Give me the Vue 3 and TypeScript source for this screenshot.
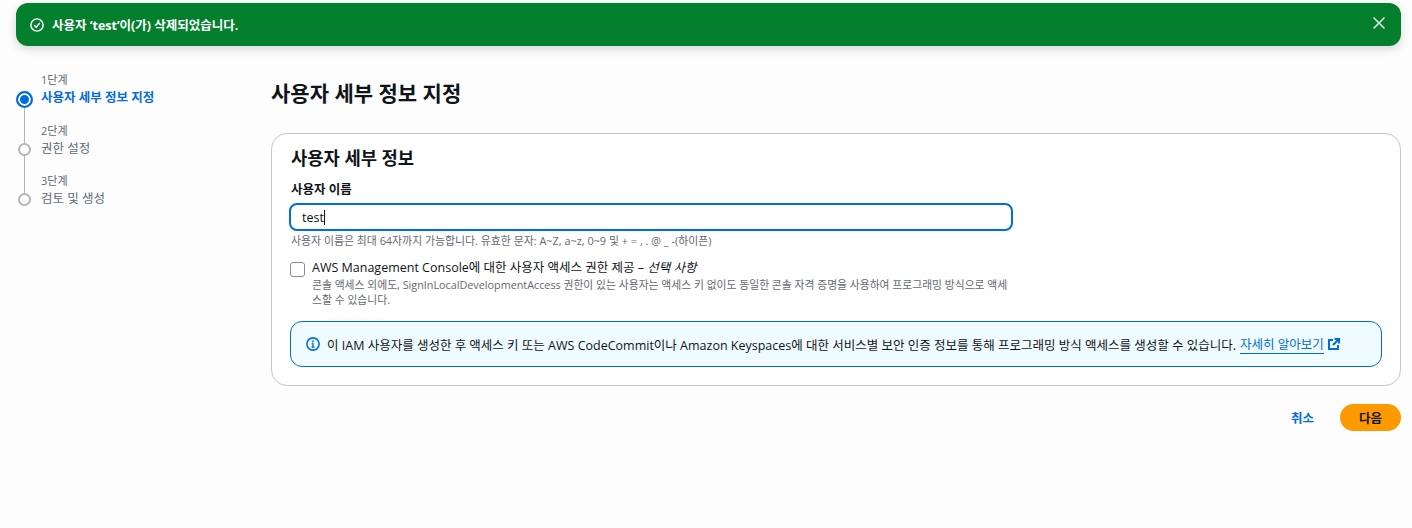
<template>
  <div class="page">
    <div class="flash">
      <svg class="flash-icon" viewBox="0 0 16 16" width="14" height="14" fill="none">
        <circle cx="8" cy="8" r="7" stroke="currentColor" stroke-width="1.7" />
        <path d="M4.8 8.2 7.1 10.5 11.2 5.8" stroke="currentColor" stroke-width="1.7" />
      </svg>
      <span class="flash-text">사용자 ‘test’이(가) 삭제되었습니다.</span>
      <svg class="flash-close" viewBox="0 0 16 16" width="16" height="16" fill="none">
        <path d="M2.500 2.500 13.500 13.500M13.500 2.500 2.500 13.500" stroke="currentColor" stroke-width="1.6" />
      </svg>
    </div>

    <div class="layout">
      <nav class="steps">
        <div v-for="(step, i) in steps" :key="step.label" class="step" :class="{ active: i === 0 }">
          <div class="step-num">{{ i + 1 }}단계</div>
          <div class="step-row">
            <span class="dot"></span>
            <span class="step-label">{{ step.label }}</span>
          </div>
        </div>
      </nav>

      <main class="main">
        <h1 class="title">사용자 세부 정보 지정</h1>

        <section class="card">
          <h2 class="card-title">사용자 세부 정보</h2>
          <label class="field-label">사용자 이름</label>
          <div class="input"><span>test</span><i class="caret"></i></div>
          <p class="hint">사용자 이름은 최대 64자까지 가능합니다. 유효한 문자: A~Z, a~z, 0~9 및 + = , . @ _ -(하이픈)</p>

          <div class="check">
            <span class="box"></span>
            <div class="check-body">
              <div class="check-label">AWS Management Console에 대한 사용자 액세스 권한 제공 – <em>선택 사항</em></div>
              <p class="check-desc">콘솔 액세스 외에도, SignInLocalDevelopmentAccess 권한이 있는 사용자는 액세스 키 없이도 동일한 콘솔 자격 증명을 사용하여 프로그래밍 방식으로 액세<wbr />스할 수 있습니다.</p>
            </div>
          </div>

          <div class="info">
            <svg class="info-icon" viewBox="0 0 16 16" width="14" height="14" fill="none">
              <circle cx="8" cy="8" r="7" stroke="currentColor" stroke-width="1.8" />
              <path d="M8 7v4.500M6.400 11.500h3.200M6.600 7H8" stroke="currentColor" stroke-width="1.600" />
              <rect x="7.100" y="3.900" width="1.800" height="1.800" fill="currentColor" />
            </svg>
            <span class="info-text">이 IAM 사용자를 생성한 후 액세스 키 또는 AWS CodeCommit이나 Amazon Keyspaces에 대한 서비스별 보안 인증 정보를 통해 프로그래밍 방식 액세스를 생성할 수 있습니다.</span>
            <a class="more">자세히 알아보기</a>
            <svg class="ext-icon" viewBox="0 0 12 12" width="12" height="12" fill="none">
              <path d="M5 2H1v9h9V7" stroke="currentColor" stroke-width="2" />
              <path d="M6.500 1H11v4.500M10.500 1.500 5 7" stroke="currentColor" stroke-width="2" />
            </svg>
          </div>
        </section>

        <div class="actions">
          <button class="cancel">취소</button>
          <button class="next">다음</button>
        </div>
      </main>
    </div>
  </div>
</template>

<script setup lang="ts">
const steps = [
  { label: '사용자 세부 정보 지정' },
  { label: '권한 설정' },
  { label: '검토 및 생성' },
]
</script>

<style>
html,
body {
  background: #fdfdfd;
}
</style>

<style scoped>
.page {
  height: 528px;
  box-sizing: border-box;
  padding: 3px 11px 0 16px;
  overflow: hidden;
  font-family: 'Open Sans', 'Noto Sans CJK KR', sans-serif;
  font-size: 12.500px;
  color: #0f141a;
}

.flash {
  display: flex;
  align-items: center;
  height: 43px;
  padding: 0 14px 0 14px;
  border-radius: 12px;
  background: #037f2e;
  color: #fff;
  box-shadow: 0 3px 10px rgba(0, 0, 0, 0.16);
}

.flash-icon {
  margin-right: 8px;
}

.flash-text {
  font-weight: 700;
}

.flash-close {
  margin-left: auto;
  margin-bottom: 3px;
  color: #dfe9e2;
}

.layout {
  display: grid;
  grid-template-columns: 255px 1fr;
  padding-top: 26px;
}

.step {
  position: relative;
  height: 50px;
  padding-left: 25px;
}

.step:first-child {
  height: 51px;
}

.step-num {
  height: 16px;
  font-size: 11px;
  line-height: 16px;
  color: #5f6b7a;
}

.step-row {
  display: flex;
  align-items: center;
  height: 20px;
  margin-top: -2px;
  color: #5f6b7a;
}

.dot {
  position: absolute;
  z-index: 1;
  left: 2px;
  top: 20px;
  width: 9px;
  height: 9px;
  border: 2px solid #b4b4bb;
  border-radius: 50%;
  background: #fff;
}

.step:not(:last-child)::after {
  content: '';
  position: absolute;
  left: 8px;
  top: 30px;
  width: 1px;
  height: 42px;
  background: #b4b4bb;
}

.active .step-label {
  font-weight: 700;
  color: #006ce0;
}

.active .dot {
  left: 0;
  top: 19px;
  width: 13px;
  height: 13px;
  border-color: #006ce0;
  box-shadow: inset 0 0 0 2px #fff;
  background: #006ce0;
}

.main {
  min-width: 0;
}

.title {
  margin: 0;
  padding-top: 3px;
  height: 61px;
  box-sizing: border-box;
  font-size: 21px;
  line-height: 36px;
  font-weight: 700;
}

.card {
  height: 253px;
  box-sizing: border-box;
  padding: 12px 19px 0;
  border: 1px solid #c6c6cd;
  border-radius: 16px;
  background: #fff;
}

.card-title {
  margin: 0;
  height: 25px;
  font-size: 17.700px;
  line-height: 25px;
  font-weight: 700;
}

.field-label {
  display: block;
  margin-top: 10px;
  height: 18px;
  line-height: 18px;
  font-weight: 700;
}

.input {
  display: flex;
  align-items: center;
  width: 724px;
  height: 28px;
  margin: 4px 0 0 -2px;
  box-sizing: border-box;
  padding-left: 11px;
  border: 2px solid #006ce0;
  border-radius: 8px;
}

.caret {
  width: 1px;
  height: 15px;
  background: #0f141a;
}

.hint {
  margin: 1px 0 0;
  height: 18px;
  font-size: 10.900px;
  line-height: 18px;
  color: #656871;
}

.check {
  display: flex;
  gap: 7px;
  width: 722px;
  margin: 9px 0 0 -1px;
}

.box {
  flex: none;
  width: 13px;
  height: 13px;
  margin-top: 3px;
  border: 1px solid #8c8c94;
  border-radius: 3px;
  background: #fff;
}

.check-label {
  height: 18px;
  line-height: 18px;
}

.check-desc {
  margin: 0;
  font-size: 10.800px;
  line-height: 15px;
  color: #656871;
}

.info {
  display: flex;
  align-items: center;
  height: 46px;
  box-sizing: border-box;
  margin: 14px -1px 0;
  padding: 0 15px;
  border: 1px solid #006ce0;
  border-radius: 12px;
  background: #f0fbff;
  white-space: nowrap;
}

.info-icon {
  flex: none;
  margin-right: 7px;
  color: #006ce0;
}

.more {
  margin-left: 4px;
  color: #006ce0;
  border-bottom: 1px solid #006ce0;
}

.ext-icon {
  flex: none;
  margin-left: 4px;
  color: #006ce0;
}

.actions {
  display: flex;
  justify-content: flex-end;
  align-items: center;
  gap: 26px;
  margin-top: 18px;
}

.actions button {
  border: 0;
  padding: 0;
  font: inherit;
  font-weight: 700;
}

.cancel {
  background: none;
  color: #006ce0;
}

.next {
  width: 61px;
  height: 27px;
  border-radius: 14px;
  background: #ff9900;
  color: #0f141a;
}
</style>
